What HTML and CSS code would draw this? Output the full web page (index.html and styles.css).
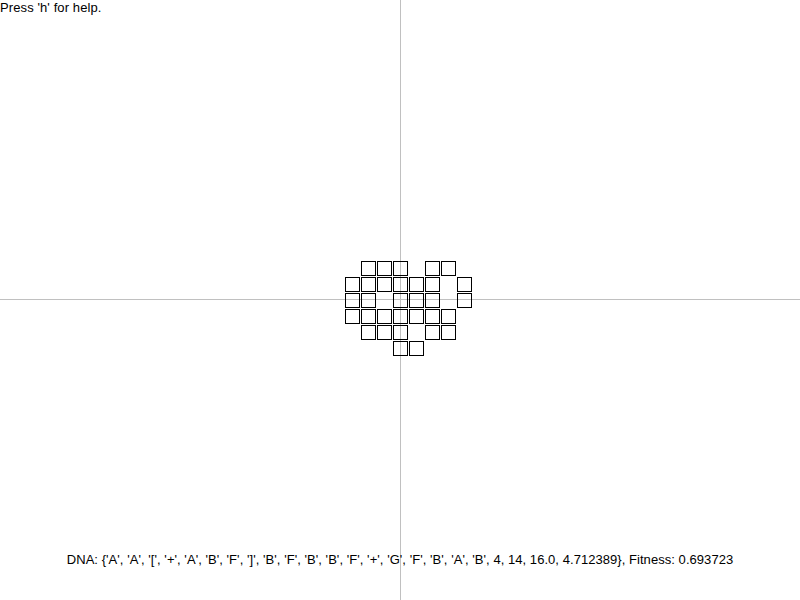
FILE: index.html
```html
<!DOCTYPE html>
<html lang="en">
<head>
<meta charset="UTF-8">
<title>L-System Evolver</title>
<link rel="stylesheet" href="styles.css">
</head>
<body>

<div class="stage">
  <svg class="canvas" width="800" height="600" viewBox="0 0 800 600">
    <line class="axis" x1="400.5" y1="0" x2="400.5" y2="600"></line>
    <line class="axis" x1="0" y1="299.5" x2="800" y2="299.5"></line>
    <g id="cells"></g>
  </svg>
  <p class="help">Press 'h' for help.</p>
  <p class="dna">DNA: {'A', 'A', '[', '+', 'A', 'B', 'F', ']', 'B', 'F', 'B', 'B', 'F', '+', 'G', 'F', 'B', 'A', 'B', 4, 14, 16.0, 4.712389}, Fitness: 0.693723</p>
</div>

<script>
  // occupied cells of the grown shape, row by row
  const rows = [
    [1, 2, 3, 5, 6],
    [0, 1, 2, 3, 4, 5, 7],
    [0, 1, 3, 4, 5, 7],
    [0, 1, 2, 3, 4, 5, 6],
    [1, 2, 3, 5, 6],
    [3, 4]
  ];
  const cells = document.getElementById('cells');
  rows.forEach((cols, r) => {
    cols.forEach(c => {
      const rect = document.createElementNS('http://www.w3.org/2000/svg', 'rect');
      rect.setAttribute('x', 345.5 + c * 16);
      rect.setAttribute('y', 261.5 + r * 16);
      rect.setAttribute('width', 14);
      rect.setAttribute('height', 14);
      rect.setAttribute('class', 'cell');
      cells.appendChild(rect);
    });
  });
</script>

</body>
</html>
```
FILE: styles.css
```css
body {
  margin: 0;
  padding: 0;
  background-color: #fff;
  font-family: "Liberation Sans", Arial, sans-serif;
  font-size: 13px;
  letter-spacing: 0.05px;
  color: #000;
}
.stage {
  position: relative;
  width: 800px;
  height: 600px;
  display: flex;
  flex-direction: column;
  justify-content: space-between;
  overflow: hidden;
}
.canvas {
  position: absolute;
  left: 0;
  top: 0;
}
.axis {
  stroke: #c0c0c0;
  stroke-width: 1;
}
.cell {
  fill: none;
  stroke: #000;
  stroke-width: 1;
}
.help {
  position: relative;
  margin: 0;
  padding: 0;
  line-height: 16px;
  letter-spacing: 0.1px;
}
.dna {
  position: relative;
  margin: 0 0 32px 0;
  text-align: center;
  line-height: 16px;
}
```
